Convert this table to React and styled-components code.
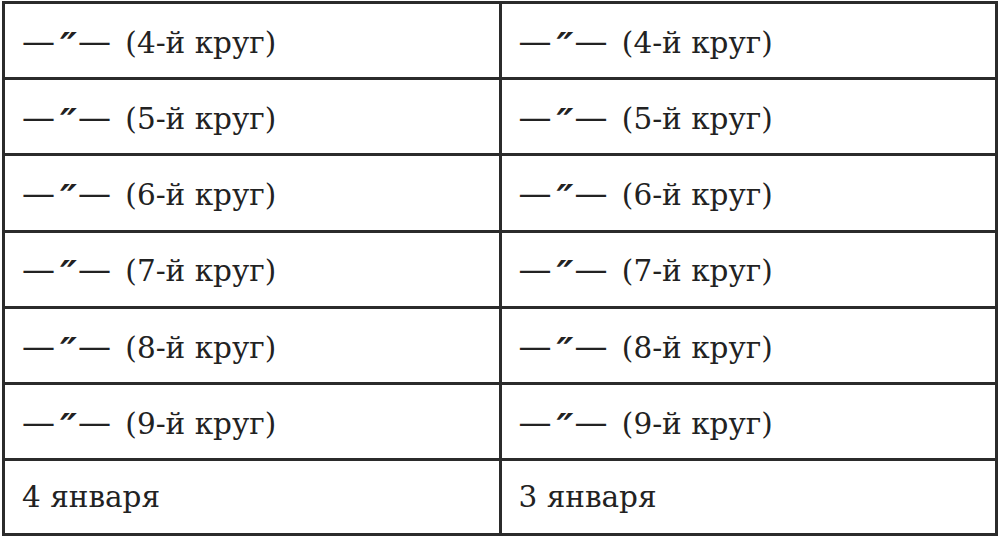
import React from 'react';
import styled, { createGlobalStyle } from 'styled-components';

const GlobalStyle = createGlobalStyle`
  html, body {
    margin: 0;
    padding: 0;
    background: #fff;
  }
`;

const Wrapper = styled.div`
  padding: 1px 2px 0 2px;
`;

const Table = styled.table`
  width: 996px;
  border-collapse: collapse;
  font-family: "DejaVu Serif", "Liberation Serif", serif;
  font-size: 29.5px;
  color: #222;
`;

const Cell = styled.td`
  width: 50%;
  height: ${(p) => (p.$last ? 75 : 76.2)}px;
  border: 3px solid #2b2b2b;
  padding: 2px 0 0 17px;
  vertical-align: middle;
  box-sizing: border-box;
  line-height: 1.2;
`;

const Dash = styled.span`
  font-size: 33px;
  margin-right: ${(p) => (p.$end ? 5 : 0)}px;
`;

const Ditto = styled.span`
  font-family: "DejaVu Sans", sans-serif;
  font-style: italic;
  font-weight: bold;
  font-size: 38px;
  line-height: 0;
  vertical-align: -6px;
  margin: 0 1px 0 5px;
`;

const rounds = [4, 5, 6, 7, 8, 9];

const Round = ({ n }) => (
  <>
    <Dash>—</Dash>
    <Ditto>″</Ditto>
    <Dash $end>—</Dash> ({n}-й круг)
  </>
);

export default function App() {
  return (
    <Wrapper>
      <GlobalStyle />
      <Table>
        <tbody>
          {rounds.map((n) => (
            <tr key={n}>
              <Cell><Round n={n} /></Cell>
              <Cell><Round n={n} /></Cell>
            </tr>
          ))}
          <tr>
            <Cell $last>4 января</Cell>
            <Cell $last>3 января</Cell>
          </tr>
        </tbody>
      </Table>
    </Wrapper>
  );
}
